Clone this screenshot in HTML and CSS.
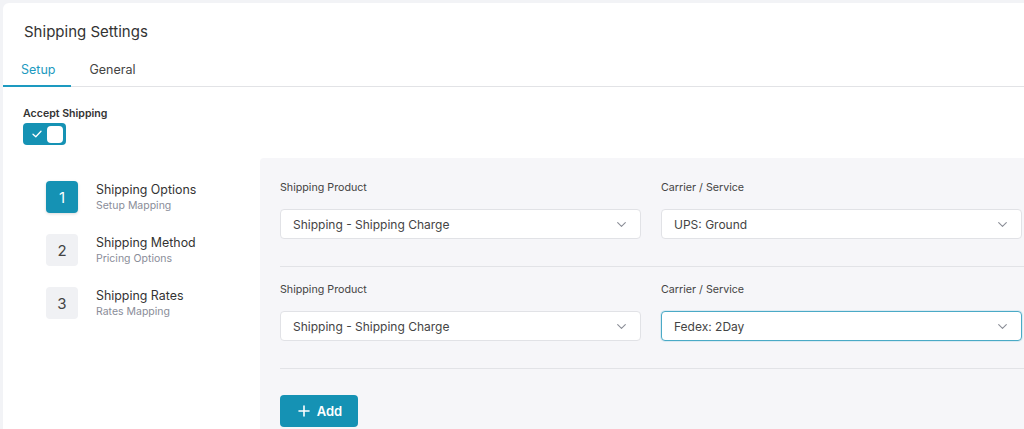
FILE: index.html
```html
<!DOCTYPE html>
<html lang="en">
<head>
<meta charset="utf-8">
<title>Shipping Settings</title>
<link rel="stylesheet" href="styles.css">
</head>
<body>
<div class="card">
  <h1 class="title">Shipping Settings</h1>
  <nav class="tabs">
    <a class="tab active">Setup</a>
    <a class="tab">General</a>
  </nav>
  <div class="content">
    <div class="accept">
      <div class="accept-label">Accept Shipping</div>
      <div class="toggle">
        <svg class="toggle-check" width="10" height="8" viewBox="0 0 10 8"><path d="M1 4.2 L3.8 6.8 L9 1.2" fill="none" stroke="#fff" stroke-width="1.3" stroke-linecap="round" stroke-linejoin="round"/></svg>
        <span class="toggle-knob"></span>
      </div>
    </div>
    <div class="main">
      <ul class="steps">
        <li class="step active">
          <span class="step-num">1</span>
          <div class="step-text"><div class="step-title">Shipping Options</div><div class="step-sub">Setup Mapping</div></div>
        </li>
        <li class="step">
          <span class="step-num">2</span>
          <div class="step-text"><div class="step-title">Shipping Method</div><div class="step-sub">Pricing Options</div></div>
        </li>
        <li class="step">
          <span class="step-num">3</span>
          <div class="step-text"><div class="step-title">Shipping Rates</div><div class="step-sub">Rates Mapping</div></div>
        </li>
      </ul>
      <section class="panel">
        <div class="row">
          <div class="field">
            <label class="label">Shipping Product</label>
            <div class="select"><span>Shipping - Shipping Charge</span><svg class="chev" width="9" height="5" viewBox="0 0 9 5"><path d="M0.7 0.7 L4.5 4.3 L8.3 0.7" fill="none" stroke="#8a8d96" stroke-width="1.1" stroke-linecap="round" stroke-linejoin="round"/></svg></div>
          </div>
          <div class="field">
            <label class="label">Carrier / Service</label>
            <div class="select"><span>UPS: Ground</span><svg class="chev" width="9" height="5" viewBox="0 0 9 5"><path d="M0.7 0.7 L4.5 4.3 L8.3 0.7" fill="none" stroke="#8a8d96" stroke-width="1.1" stroke-linecap="round" stroke-linejoin="round"/></svg></div>
          </div>
        </div>
        <div class="row">
          <div class="field">
            <label class="label">Shipping Product</label>
            <div class="select"><span>Shipping - Shipping Charge</span><svg class="chev" width="9" height="5" viewBox="0 0 9 5"><path d="M0.7 0.7 L4.5 4.3 L8.3 0.7" fill="none" stroke="#8a8d96" stroke-width="1.1" stroke-linecap="round" stroke-linejoin="round"/></svg></div>
          </div>
          <div class="field">
            <label class="label">Carrier / Service</label>
            <div class="select focus"><span>Fedex: 2Day</span><svg class="chev" width="9" height="5" viewBox="0 0 9 5"><path d="M0.7 0.7 L4.5 4.3 L8.3 0.7" fill="none" stroke="#8a8d96" stroke-width="1.1" stroke-linecap="round" stroke-linejoin="round"/></svg></div>
          </div>
        </div>
        <button class="add-btn"><svg width="12" height="12" viewBox="0 0 12 12"><path d="M6 1 V11 M1 6 H11" stroke="#fff" stroke-width="1.6" stroke-linecap="round"/></svg><span>Add</span></button>
      </section>
    </div>
  </div>
</div>
</body>
</html>
```
FILE: styles.css
```css
* { box-sizing: border-box; }
html, body { margin: 0; height: 100%; }
body {
  background: #f2f3f6;
  font-family: Inter, "Noto Sans", "Liberation Sans", sans-serif;
  color: #333;
  padding: 3px 0 0 3px;
  overflow: hidden;
}
.card {
  background: #fff;
  border-radius: 6px 0 0 0;
  min-height: 100%;
}
.title {
  margin: 0;
  padding: 20px 0 0 21px;
  font-size: 15px;
  font-weight: 400;
  line-height: 18px;
  color: #333;
}
.tabs {
  display: flex;
  margin-top: 15px;
  border-bottom: 1px solid #e2e3e6;
}
.tab {
  padding: 6px 16px 7px 18px;
  font-size: 12.5px;
  line-height: 16px;
  color: #444;
  border-bottom: 2px solid transparent;
  margin-bottom: -1px;
}
.tab.active {
  color: #1d9ac0;
  border-bottom-color: #1d9ac0;
}
.content {
  padding: 20px 0 0 20px;
}
.accept-label {
  font-size: 10.6px;
  font-weight: 600;
  line-height: 14px;
  color: #333;
}
.toggle {
  margin-top: 2px;
  width: 43px;
  height: 22px;
  background: #1592b4;
  border-radius: 4px;
  display: flex;
  align-items: center;
  justify-content: space-between;
  padding: 0 3px 0 9px;
}
.toggle-knob {
  width: 16px;
  height: 17px;
  background: #fff;
  border-radius: 4px;
}
.main {
  display: flex;
  margin-top: 13px;
}
.steps {
  list-style: none;
  margin: 0;
  padding: 23px 0 0 23px;
  width: 237px;
  flex: none;
  display: flex;
  flex-direction: column;
  gap: 21px;
}
.step {
  display: flex;
  align-items: flex-start;
  gap: 18px;
  height: 32px;
}
.step-num {
  width: 32px;
  height: 32px;
  border-radius: 4px;
  background: #f0f1f4;
  color: #444;
  font-size: 15px;
  display: flex;
  align-items: center;
  justify-content: center;
  flex: none;
}
.step.active .step-num {
  background: #1592b4;
  color: #fff;
  box-shadow: 0 1px 3px rgba(0,0,0,0.15);
}
.step-text { padding-top: 1px; }
.step-title {
  font-size: 12.4px;
  line-height: 16px;
  color: #333;
}
.step-sub {
  font-size: 10.5px;
  line-height: 14px;
  margin-top: 1px;
  color: #8a8d99;
}
.panel {
  flex: 1;
  background: #f6f6f9;
  border-radius: 4px 0 0 0;
  padding: 7px 0 40px 20px;
  min-height: 300px;
}
.row {
  display: grid;
  grid-template-columns: 361px 361px;
  gap: 20px;
  padding: 16px 0 27px;
  border-bottom: 1px solid #e2e3e7;
}
.label {
  display: block;
  font-size: 10.7px;
  line-height: 14px;
  color: #444;
  margin-bottom: 14px;
}
.select {
  height: 30px;
  background: #fff;
  border: 1px solid #e1e2e6;
  border-radius: 4px;
  display: flex;
  align-items: center;
  justify-content: space-between;
  padding: 0 14px 0 12px;
  font-size: 12px;
  color: #444;
}
.select.focus {
  border-color: #4aaac6;
  box-shadow: 0 0 0 1px rgba(74,170,198,0.15);
}
.add-btn {
  margin-top: 26px;
  width: 78px;
  height: 32px;
  background: #1592b4;
  border: none;
  border-radius: 4px;
  color: #fff;
  font-family: inherit;
  font-size: 13px;
  font-weight: 600;
  display: flex;
  align-items: center;
  justify-content: center;
  gap: 7px;
  padding: 0 0 0 2px;
}
```
